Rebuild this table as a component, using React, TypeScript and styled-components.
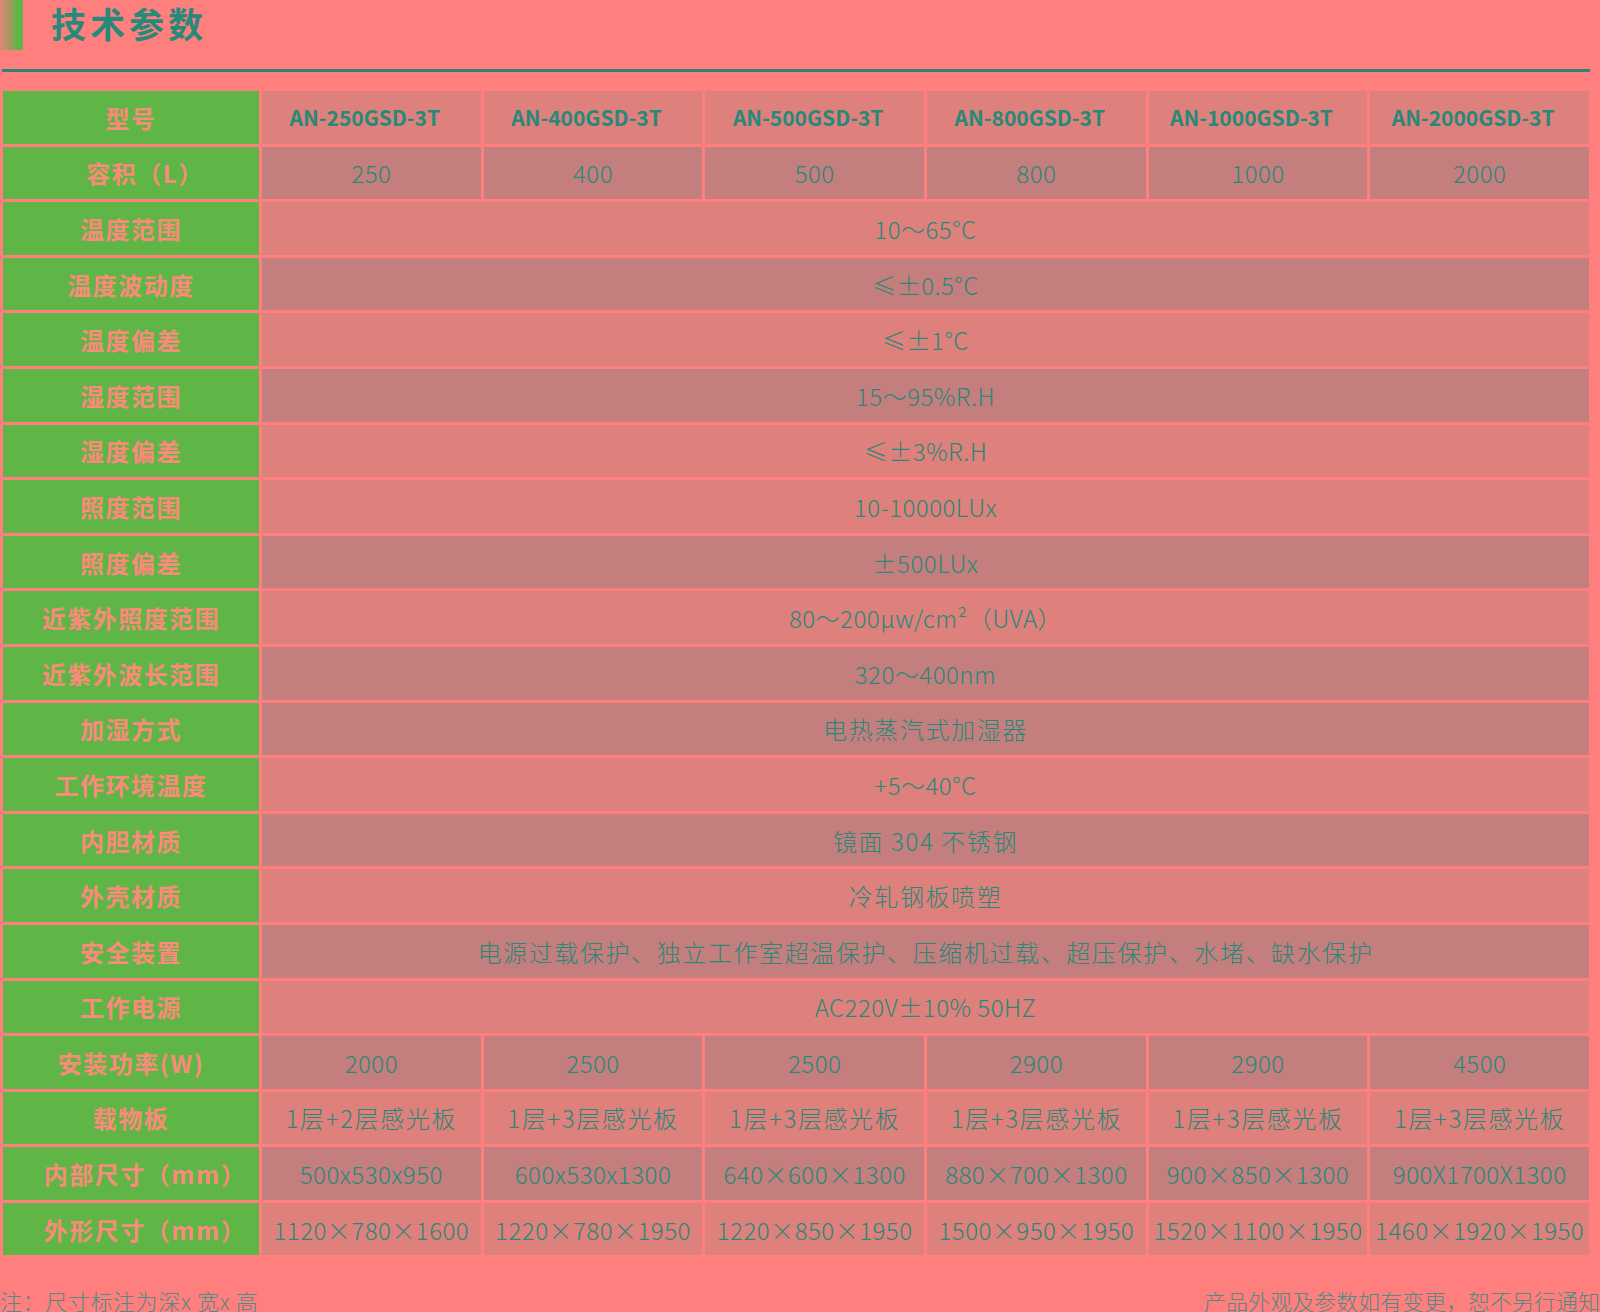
import React from "react";
import styled, { createGlobalStyle } from "styled-components";

const GlobalStyle = createGlobalStyle`
  html, body {
    margin: 0;
    padding: 0;
    background: #ff7f7e;
    overflow: hidden;
  }
  body {
    font-family: "Noto Sans CJK SC", "Noto Sans", sans-serif;
  }
`;

const Page = styled.div`
  width: 1600px;
  height: 1312px;
  overflow: hidden;
  background: #ff7f7e;
`;

const Header = styled.div`
  display: flex;
  align-items: center;
  height: 50px;
`;

const Bar = styled.div`
  width: 23px;
  height: 50px;
  background: linear-gradient(to right, #e48478 0%, #a09a5c 45%, #5fb546 75%, #5fb546 100%);
`;

const Title = styled.h1`
  margin: 0 0 4px 28px;
  font-family: "Noto Sans CJK SC", sans-serif;
  font-weight: 700;
  font-size: 35px;
  letter-spacing: 4px;
  color: #27897a;
  line-height: 40px;
`;

const Rule = styled.div`
  margin: 19px 0 0 2px;
  width: 1588px;
  height: 3px;
  background: #2c8676;
`;

const Table = styled.div`
  margin: 19px 0 0 3px;
  width: 1586px;
  display: grid;
  grid-template-columns: 256px repeat(6, 1fr);
  grid-auto-rows: 52.6px;
  gap: 3px;
`;

const Label = styled.div<{ $shift?: boolean }>`
  background: #5fb546;
  color: #fa8a79;
  font-family: "Noto Sans CJK SC", sans-serif;
  font-weight: 700;
  font-size: 24px;
  letter-spacing: 1.5px;
  display: flex;
  align-items: center;
  justify-content: center;
  white-space: nowrap;
  padding-left: ${(p) => (p.$shift ? "28px" : "0")};
`;

const Cell = styled.div<{ $dark?: boolean; $span?: number; $head?: boolean; $wide?: boolean }>`
  grid-column: span ${(p) => p.$span ?? 1};
  background: ${(p) => (p.$dark ? "#c47e7e" : "#de807c")};
  color: #27897a;
  font-family: "Noto Sans CJK SC", sans-serif;
  font-weight: ${(p) => (p.$head ? 700 : 300)};
  font-size: ${(p) => (p.$head ? "21px" : "24px")};
  letter-spacing: ${(p) => (p.$head ? "0px" : p.$wide ? "1.6px" : "0.5px")};
  padding-right: ${(p) => (p.$head ? "13px" : "0")};
  display: flex;
  align-items: center;
  justify-content: center;
  white-space: nowrap;
  overflow: hidden;
`;

const Footer = styled.div`
  display: flex;
  justify-content: space-between;
  margin-top: 29px;
  width: 1600px;
  font-family: "Noto Sans CJK SC", sans-serif;
  font-weight: 300;
  font-size: 22px;
  line-height: 33px;
  color: #528a85;
`;

const NoteLeft = styled.span`
  letter-spacing: 0.6px;
`;

const NoteRight = styled.span`
  letter-spacing: 0px;
`;

type Row = { label: string; dark: boolean; values: string[]; head?: boolean };

const rows: Row[] = [
  {
    label: "型号",
    dark: false,
    head: true,
    values: ["AN-250GSD-3T", "AN-400GSD-3T", "AN-500GSD-3T", "AN-800GSD-3T", "AN-1000GSD-3T", "AN-2000GSD-3T"],
  },
  { label: "容积（L）", dark: true, values: ["250", "400", "500", "800", "1000", "2000"] },
  { label: "温度范围", dark: false, values: ["10～65°C"] },
  { label: "温度波动度", dark: true, values: ["≤±0.5°C"] },
  { label: "温度偏差", dark: false, values: ["≤±1°C"] },
  { label: "湿度范围", dark: true, values: ["15～95%R.H"] },
  { label: "湿度偏差", dark: false, values: ["≤±3%R.H"] },
  { label: "照度范围", dark: false, values: ["10-10000LUx"] },
  { label: "照度偏差", dark: true, values: ["±500LUx"] },
  { label: "近紫外照度范围", dark: false, values: ["80～200μw/cm²（UVA）"] },
  { label: "近紫外波长范围", dark: true, values: ["320～400nm"] },
  { label: "加湿方式", dark: true, values: ["电热蒸汽式加湿器"] },
  { label: "工作环境温度", dark: false, values: ["+5～40°C"] },
  { label: "内胆材质", dark: true, values: ["镜面 304 不锈钢"] },
  { label: "外壳材质", dark: false, values: ["冷轧钢板喷塑"] },
  {
    label: "安全装置",
    dark: true,
    values: ["电源过载保护、独立工作室超温保护、压缩机过载、超压保护、水堵、缺水保护"],
  },
  { label: "工作电源", dark: false, values: ["AC220V±10% 50HZ"] },
  { label: "安装功率(W)", dark: true, values: ["2000", "2500", "2500", "2900", "2900", "4500"] },
  {
    label: "载物板",
    dark: false,
    values: ["1层+2层感光板", "1层+3层感光板", "1层+3层感光板", "1层+3层感光板", "1层+3层感光板", "1层+3层感光板"],
  },
  {
    label: "内部尺寸（mm）",
    dark: true,
    values: ["500x530x950", "600x530x1300", "640×600×1300", "880×700×1300", "900×850×1300", "900X1700X1300"],
  },
  {
    label: "外形尺寸（mm）",
    dark: false,
    values: ["1120×780×1600", "1220×780×1950", "1220×850×1950", "1500×950×1950", "1520×1100×1950", "1460×1920×1950"],
  },
];

const hasCjk = (s: string) => /[\u4e00-\u9fff]/.test(s);

export default function App() {
  return (
    <>
      <GlobalStyle />
      <Page>
        <Header>
          <Bar />
          <Title>技术参数</Title>
        </Header>
        <Rule />
        <Table>
          {rows.map((r) => (
            <React.Fragment key={r.label}>
              <Label $shift={r.label.includes("（")}>{r.label}</Label>
              {r.values.map((v, i) => (
                <Cell
                  key={i}
                  $dark={r.dark}
                  $head={r.head}
                  $wide={hasCjk(v)}
                  $span={r.values.length === 1 ? 6 : 1}
                >
                  {v}
                </Cell>
              ))}
            </React.Fragment>
          ))}
        </Table>
        <Footer>
          <NoteLeft>注：尺寸标注为深x 宽x 高</NoteLeft>
          <NoteRight>产品外观及参数如有变更，恕不另行通知</NoteRight>
        </Footer>
      </Page>
    </>
  );
}
